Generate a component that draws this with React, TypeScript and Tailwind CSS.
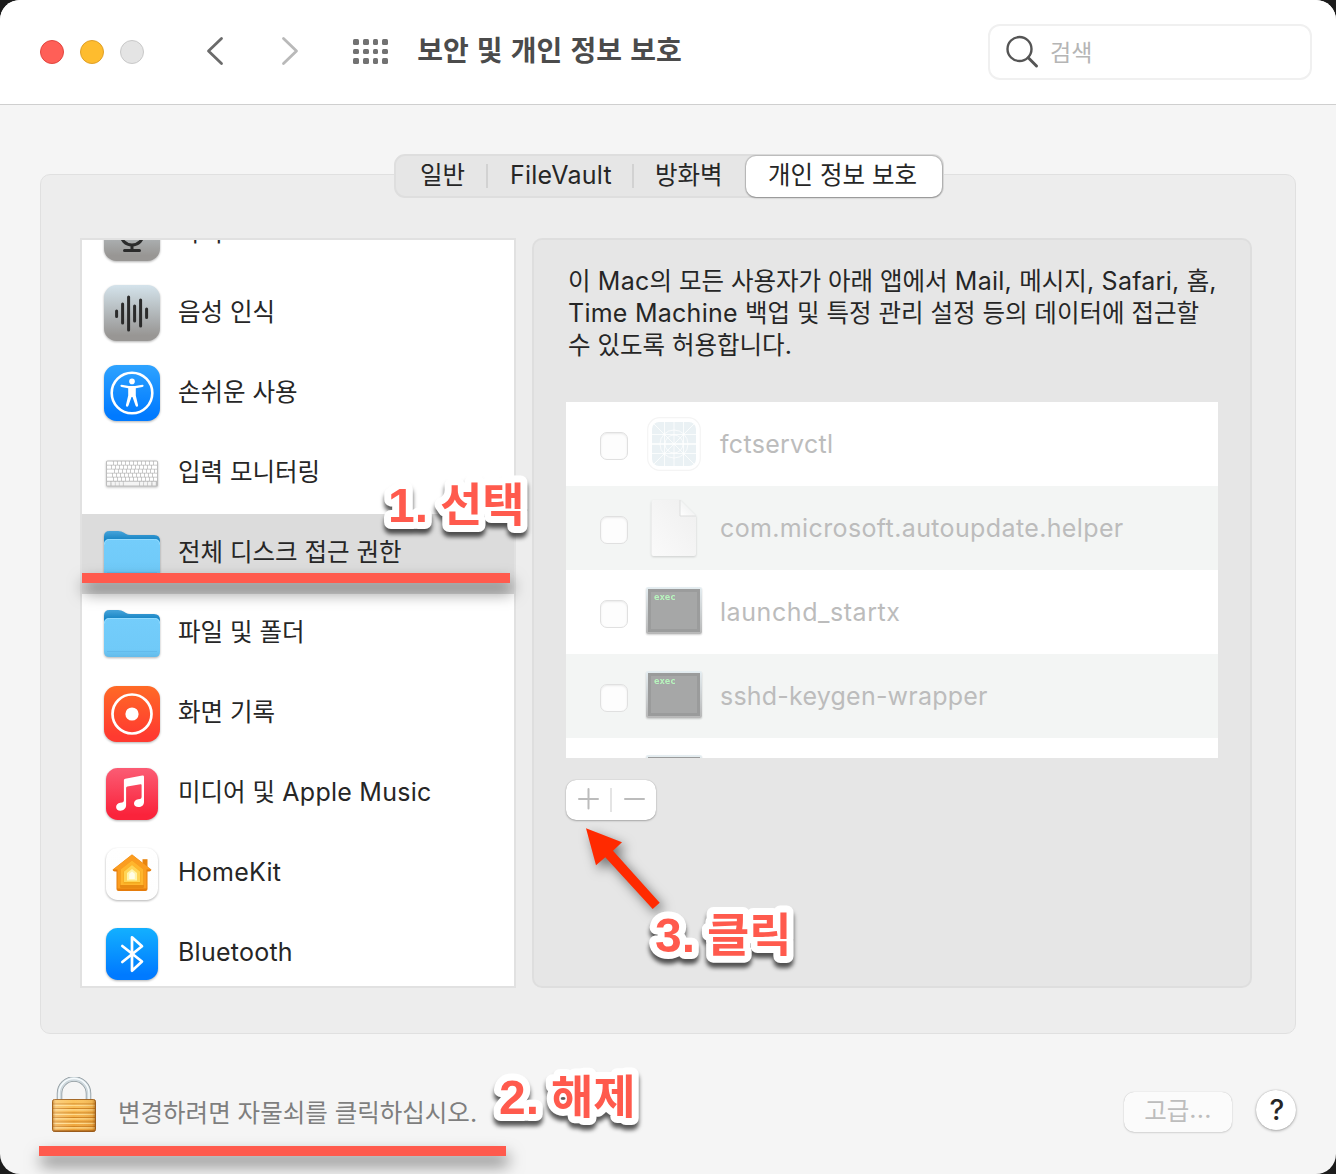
import type { ReactNode } from "react";

const FONT = "font-['Inter','Noto_Sans_CJK_KR',sans-serif]";

/* Sets Hangul runs and Latin runs at their own optical sizes. */
function T({ children }: { children: string }) {
  const runs = children.match(/[\uac00-\ud7a3]+(?: +[\uac00-\ud7a3]+)*|[^\uac00-\ud7a3]+/g) ?? [];
  return (
    <>
      {runs.map((run, i) =>
        /[\uac00-\ud7a3]/.test(run) ? (
          <span key={i} className="font-['Noto_Sans_CJK_KR',sans-serif] text-[24.5px] [word-spacing:1.4px]">
            {run}
          </span>
        ) : (
          <span key={i} className="text-[25px] tracking-[0.25px]">
            {run}
          </span>
        ),
      )}
    </>
  );
}

function Tile({ size, from, to, children }: { size: number; from: string; to: string; children: ReactNode }) {
  const id = `tile-${from.slice(1)}-${to.slice(1)}`;
  return (
    <svg width={size} height={size} viewBox={`0 0 ${size} ${size}`} className="drop-shadow-[0_1px_1px_rgba(0,0,0,0.3)]">
      <defs>
        <linearGradient id={id} x1="0" y1="0" x2="0" y2="1">
          <stop offset="0" stopColor={from} />
          <stop offset="0.9" stopColor={to} />
        </linearGradient>
      </defs>
      <rect width={size} height={size} rx={size * 0.225} fill={`url(#${id})`} />
      {children}
    </svg>
  );
}

function MicIcon() {
  return (
    <Tile size={56} from="#d3e2ea" to="#989694">
      <g stroke="#2b2b2b" fill="none" strokeLinecap="round">
        <rect x="22" y="8" width="12" height="24" rx="6" fill="#2b2b2b" stroke="none" />
        <path d="M16.5 26v2.5a11.5 11.5 0 0 0 23 0V26" strokeWidth="3" />
        <path d="M28 41v4.500M20.500 45.500h15" strokeWidth="3" />
      </g>
    </Tile>
  );
}

function WaveIcon() {
  return (
    <Tile size={56} from="#d4e3eb" to="#989694">
      <path
        d="M12.6 26v5.4M18.6 19v19M24.6 12v33M30.6 21v15M36.6 15v26M42.6 24v8.5"
        stroke="#2b2b2b"
        strokeWidth="3"
        strokeLinecap="round"
      />
    </Tile>
  );
}

function AccessIcon() {
  return (
    <Tile size={56} from="#2ea3ff" to="#007aff">
      <circle cx="28" cy="28" r="20.3" fill="none" stroke="#fff" strokeWidth="2.6" />
      <circle cx="28" cy="16.4" r="2.8" fill="#fff" />
      <path
        d="M17.6 19.8l7.4 1.1q3 .4 6 0l7.4-1.1q1.2 0 1.2 1t-1.2 1.2l-6.6 1.2v7.4l2.3 9.6q0 1.3-1 1.5t-1.5-1L28.5 32h-1L24.4 40.7q-.5 1.2-1.5 1t-1-1.500l2.300-9.600v-7.400l-6.600-1.200q-1.200-.200-1.200-1.200t1.200-1z"
        fill="#fff"
      />
    </Tile>
  );
}

function KeyboardIcon() {
  const starts = [5, 3, 6, 4, 5];
  return (
    <svg width="56" height="56" viewBox="0 0 56 56" className="drop-shadow-[0_1px_1px_rgba(0,0,0,0.25)]">
      <rect x="2" y="15.5" width="52" height="26" rx="1.5" fill="#bdbdbd" />
      {[0, 1, 2, 3, 4].map((r) => (
        <g key={r} fill="#fff">
          <rect x="3" y={16.5 + r * 4} width={starts[r] + 1} height="3.2" rx="0.5" />
          {Array.from({ length: 10 }, (_, c) => (
            <rect key={c} x={4.8 + starts[r] + c * 4} y={16.5 + r * 4} width="3.2" height="3.2" rx="0.5" />
          ))}
          <rect x={44.8 + starts[r]} y={16.5 + r * 4} width={8.2 - starts[r]} height="3.2" rx="0.5" />
        </g>
      ))}
      <g fill="#f4f4f4">
        {[3, 7.5, 11.5, 15.5].map((x) => (
          <rect key={x} x={x} y="36.8" width="3.4" height="3.8" rx="0.5" />
        ))}
        <rect x="19.7" y="36.8" width="15.5" height="3.8" rx="0.5" />
        {[36, 40, 44, 48.5].map((x) => (
          <rect key={x} x={x} y="36.8" width="3.3" height="3.8" rx="0.5" />
        ))}
      </g>
    </svg>
  );
}

function FolderIcon() {
  return (
    <svg width="56" height="56" viewBox="0 0 56 56" className="drop-shadow-[0_1px_1px_rgba(0,0,0,0.3)]">
      <defs>
        <linearGradient id="folder-back" x1="0" y1="0" x2="0" y2="1">
          <stop offset="0" stopColor="#46a4da" />
          <stop offset="0.3" stopColor="#1784c4" />
        </linearGradient>
        <linearGradient id="folder-front" x1="0" y1="0" x2="0" y2="1">
          <stop offset="0" stopColor="#74cdfb" />
          <stop offset="0.8" stopColor="#70caf8" />
          <stop offset="1" stopColor="#63bbea" />
        </linearGradient>
      </defs>
      <path d="M0 9.500Q0 4 5.500 4H14q3.500 0 6 1.700l1.500 1Q23.500 8 26.500 8H50q6 0 6 6v20H0z" fill="url(#folder-back)" />
      <path d="M0 17.500Q0 12 5.500 12h45q5.500 0 5.500 5.500V45.500q0 5.500-5.500 5.500h-45Q0 51 0 45.500z" fill="url(#folder-front)" />
      <path d="M.5 17.500q0-5 5-5h45q5 0 5 5" stroke="#92dbff" strokeWidth="1" fill="none" />
      <path d="M3 45.500h50" stroke="#60b8e8" strokeWidth="0.8" />
    </svg>
  );
}

function RecordIcon() {
  return (
    <Tile size={56} from="#ff6a26" to="#ff3a30">
      <circle cx="28" cy="28" r="19.5" fill="none" stroke="#fff" strokeWidth="2.7" />
      <circle cx="28" cy="28" r="6.6" fill="#fff" />
    </Tile>
  );
}

function MusicIcon() {
  return (
    <Tile size={52} from="#fb5c74" to="#fa233b">
      <path
        d="M36.300 8.100Q38 7.700 38 9.300V34.500c0 3-2.300 5.100-5.600 5.100-2.700 0-4.400-1.500-4.400-3.600 0-2.300 1.600-3.700 4.200-4.200l2-.400q1.400-.300 1.400-1.900V17.500q0-1.100-1.200-.800L21.300 19q-1.200.300-1.200 1.500v17.300c0 3.100-2.400 5.400-5.700 5.400-2.600 0-4.300-1.500-4.300-3.700 0-2.300 1.600-3.700 4.100-4.200l2-.400q1.700-.400 1.700-2V12.800q0-1.300 1.400-1.600z"
        transform="translate(0 -0.500)"
        fill="#fff"
      />
    </Tile>
  );
}

function HomeIcon() {
  return (
    <Tile size={52} from="#ffffff" to="#fefefe">
      <path d="M36.500 11.200h5V22h-5z" fill="#e8850f" />
      <path d="M26 6.500L45.500 21.800q-.5 1.700-2.300 1.700H41.500V41q0 2-2 2h-27q-2 0-2-2V23.500H8.800q-1.800 0-2.300-1.700z" fill="#e57c0b" />
      <path d="M26 6.500L45 21.500H40.500V40.500h-29v-19H7z" fill="#fb9d20" />
      <path d="M26 12.500L38 22v16.700q0 1.300-1.300 1.300H15.300q-1.300 0-1.300-1.300V22z" fill="#e88a12" />
      <path d="M26 12.500L37.500 21.500V37h-23V21.500z" fill="#ffb52c" />
      <path d="M26 17L34.500 23.500V35.500h-17v-12z" fill="#f2a91e" />
      <path d="M26 17L34 23.500V34H18V23.500z" fill="#ffd455" />
      <path d="M26 21l5 4v7.500H21V25z" fill="#fff3a8" />
      <path d="M26 23.500l2.800 2.200V31h-5.600v-5.300z" fill="#fffde8" />
    </Tile>
  );
}

function BluetoothIcon() {
  return (
    <Tile size={52} from="#13b0ff" to="#007aff">
      <path
        d="M16.300 18L36 33.500 26 42.700V9.300L36 18.300 16.300 34"
        stroke="#fff"
        strokeWidth="2.7"
        fill="none"
        strokeLinecap="round"
        strokeLinejoin="round"
      />
    </Tile>
  );
}

function AppGridIcon() {
  return (
    <svg width="54" height="54" viewBox="0 0 54 54">
      <rect x="0.7" y="0.7" width="52.6" height="52.6" rx="12" fill="#fff" stroke="#f4f4f4" strokeWidth="1.2" />
      <rect x="5" y="5" width="44" height="44" rx="7" fill="#eaf1f4" />
      <g stroke="#fff" strokeOpacity="0.75" strokeWidth="1" fill="none">
        <path d="M17.500 5v44M27 5v44M36.500 5v44M5 17.500h44M5 36.500h44M7 7l40 40M47 7L7 47" />
        <path d="M5 27h44" strokeWidth="2" />
        <circle cx="27" cy="27" r="14" />
        <circle cx="27" cy="27" r="9" />
      </g>
    </svg>
  );
}

function DocIcon() {
  return (
    <svg width="54" height="60" viewBox="0 0 54 60" className="drop-shadow-[0_1px_1px_rgba(0,0,0,0.16)]">
      <defs>
        <linearGradient id="doc-face" x1="1" y1="0" x2="0" y2="1">
          <stop offset="0" stopColor="#efefef" />
          <stop offset="1" stopColor="#fafafa" />
        </linearGradient>
        <linearGradient id="doc-fold" x1="0" y1="1" x2="1" y2="0">
          <stop offset="0" stopColor="#fff" />
          <stop offset="0.6" stopColor="#f1f2f2" />
        </linearGradient>
      </defs>
      <path d="M6.500 2H33L49 18V56q0 2-2 2H6.500q-2 0-2-2V4q0-2 2-2z" fill="url(#doc-face)" />
      <path d="M33 2L49 18H33z" fill="url(#doc-fold)" />
      <path d="M33 2v16h16" stroke="#dcdddd" strokeWidth="1" fill="none" />
    </svg>
  );
}

function ExecIcon({ label = "exec" }: { label?: string }) {
  return (
    <div className="mb-[3px] h-[47px] w-[56px] rounded-[2px] bg-linear-to-b from-[#e4edf1] to-[#b4b4b4] p-[2px] opacity-95 shadow-[0_1px_2px_rgba(0,0,0,0.2)]">
      <div className="h-full w-full border-[3px] border-[#969797] bg-[#a2a3a3] pl-[3px] pt-px font-['DejaVu_Sans_Mono',monospace] text-[9px] font-bold leading-[9px] text-[#b4f6ba]">
        {label}
      </div>
    </div>
  );
}

function LockIcon() {
  return (
    <svg width="46" height="57" viewBox="0 0 46 57">
      <defs>
        <linearGradient id="lock-body" x1="0" y1="0" x2="0" y2="1">
          <stop offset="0" stopColor="#fcc55f" />
          <stop offset="1" stopColor="#eda035" />
        </linearGradient>
        <linearGradient id="lock-edge" x1="0" y1="0" x2="1" y2="0">
          <stop offset="0" stopColor="#a55d10" stopOpacity="0.6" />
          <stop offset="0.09" stopColor="#fff" stopOpacity="0.2" />
          <stop offset="0.5" stopColor="#fff" stopOpacity="0" />
          <stop offset="0.92" stopColor="#a55d10" stopOpacity="0.15" />
          <stop offset="1" stopColor="#8a4a0a" stopOpacity="0.6" />
        </linearGradient>
      </defs>
      <path d="M8.500 26V16.500a14.500 14.500 0 0 1 29 0V26" stroke="#8e989d" strokeWidth="5.5" fill="none" />
      <path d="M8.500 26V16.500a14.500 14.500 0 0 1 29 0V26" stroke="#cfd9de" strokeWidth="4" fill="none" />
      <path d="M8 26V16.500a15 15 0 0 1 30 0V26" stroke="#f6fbfd" strokeWidth="1.5" fill="none" />
      <rect x="1.5" y="22.5" width="43" height="32" rx="2" fill="url(#lock-body)" stroke="#9a5a17" strokeWidth="0.9" />
      {[27, 31.5, 36, 40.5, 45, 49.5].map((y) => (
        <g key={y}>
          <path d={`M2 ${y}h42`} stroke="#d08322" strokeWidth="1.1" />
          <path d={`M2 ${y + 1.4}h42`} stroke="#ffdb8c" strokeWidth="1.1" />
        </g>
      ))}
      <rect x="1.5" y="22.5" width="43" height="32" rx="2" fill="url(#lock-edge)" />
      <path d="M2.500 54h41" stroke="#8f4f10" strokeWidth="1.2" />
    </svg>
  );
}

const categories: { label: string; icon: ReactNode; nudge?: string; selected?: boolean }[] = [
  { label: "마이크", icon: <MicIcon />, nudge: "mb-0.5" },
  { label: "음성 인식", icon: <WaveIcon />, nudge: "mb-0.5" },
  { label: "손쉬운 사용", icon: <AccessIcon />, nudge: "mb-0.5" },
  { label: "입력 모니터링", icon: <KeyboardIcon />, nudge: "mb-0.5" },
  { label: "전체 디스크 접근 권한", icon: <FolderIcon />, nudge: "mt-0.5", selected: true },
  { label: "파일 및 폴더", icon: <FolderIcon /> },
  { label: "화면 기록", icon: <RecordIcon /> },
  { label: "미디어 및 Apple Music", icon: <MusicIcon /> },
  { label: "HomeKit", icon: <HomeIcon /> },
  { label: "Bluetooth", icon: <BluetoothIcon /> },
];

const apps: { label: string; tracking: string; icon: ReactNode }[] = [
  { label: "fctservctl", tracking: "tracking-[0.3px]", icon: <AppGridIcon /> },
  { label: "com.microsoft.autoupdate.helper", tracking: "tracking-[0.37px]", icon: <DocIcon /> },
  { label: "launchd_startx", tracking: "tracking-[0.57px]", icon: <ExecIcon /> },
  { label: "sshd-keygen-wrapper", tracking: "tracking-[0.22px]", icon: <ExecIcon /> },
  { label: "", tracking: "", icon: <ExecIcon label="" /> },
];

function Header() {
  return (
    <header className="flex h-[105px] shrink-0 items-center border-b border-[#cfcfcf] bg-white pl-10 pr-6">
      <div className="flex gap-4">
        <span className="size-6 rounded-full border border-[#e2463f] bg-[#ff5f57]" />
        <span className="size-6 rounded-full border border-[#e0a028] bg-[#febc2e]" />
        <span className="size-6 rounded-full border border-[#c9c9c9] bg-[#e4e4e4]" />
      </div>
      <svg width="20" height="32" viewBox="0 0 20 32" className="-mt-0.5 ml-[60px]">
        <path d="M17.500 3.500L4.500 16l13 12.500" stroke="#6b6b6b" strokeWidth="2.8" fill="none" strokeLinecap="round" strokeLinejoin="round" />
      </svg>
      <svg width="20" height="32" viewBox="0 0 20 32" className="-mt-0.5 ml-[56px]">
        <path d="M3.500 3.500L16.500 16l-13 12.500" stroke="#b9b9b9" strokeWidth="2.8" fill="none" strokeLinecap="round" strokeLinejoin="round" />
      </svg>
      <div className="-mt-px ml-[53px] grid grid-cols-4 gap-1">
        {Array.from({ length: 12 }, (_, i) => (
          <span key={i} className="size-[5.8px] rounded-[1.5px] bg-[#727272]" />
        ))}
      </div>
      <h1 className="-mt-1.5 ml-[29px] whitespace-nowrap font-['Noto_Sans_CJK_KR',sans-serif] text-[28px] font-bold leading-10 text-[#4b4b4b] [word-spacing:1.8px]">
        보안 및 개인 정보 보호
      </h1>
      <div className="ml-auto flex h-14 w-[324px] items-center rounded-xl border-2 border-[#f0f0f0] pl-4">
        <svg width="34" height="34" viewBox="0 0 34 34">
          <circle cx="13.5" cy="14" r="12" fill="none" stroke="#555" strokeWidth="2.4" />
          <path d="M22.300 22.800l8.200 8.200" stroke="#555" strokeWidth="3" strokeLinecap="round" />
        </svg>
        <span className="-mt-0.5 ml-[10px] font-['Noto_Sans_CJK_KR',sans-serif] text-[23px] leading-8 text-[#b5b5b5]">검색</span>
      </div>
    </header>
  );
}

function Tabs() {
  return (
    <div className="relative z-10 -mb-6 ml-[354px] flex h-11 w-[550px] items-center whitespace-nowrap rounded-[11px] border-2 border-[#dedede] bg-[#e6e6e6] text-[#262626]">
      <span className="-mt-1 w-[90px] pl-6">
        <T>일반</T>
      </span>
      <span className="h-6 w-0.5 bg-[#d2d2d2]" />
      <span className="w-[144px] pl-[22px]">
        <T>FileVault</T>
      </span>
      <span className="h-6 w-0.5 bg-[#d2d2d2]" />
      <span className="-mt-1 w-[112px] pl-[21px]">
        <T>방화벽</T>
      </span>
      <span className="flex h-[41px] w-[196px] items-center rounded-[10px] bg-white pb-1 pl-[22px] shadow-[0_0_1px_1px_rgba(0,0,0,0.16),0_1px_2px_rgba(0,0,0,0.25)]">
        <T>개인 정보 보호</T>
      </span>
    </div>
  );
}

function CategoryList() {
  return (
    <div className="h-[750px] w-[436px] shrink-0 overflow-hidden border-2 border-[#e1e1e1] bg-white">
      <ul className="-mt-[46px]">
        {categories.map((c) => (
          <li key={c.label} className={`flex h-20 items-center pl-[22px] ${c.selected ? "bg-[#dcdcdc]" : ""}`}>
            <span className={`flex w-14 justify-center ${c.nudge ?? ""}`}>{c.icon}</span>
            <span className="-mt-0.5 ml-[18px] whitespace-nowrap leading-9 text-[#262626]">
              <T>{c.label}</T>
            </span>
          </li>
        ))}
      </ul>
    </div>
  );
}

function AppPane() {
  return (
    <div className="h-[750px] w-[720px] rounded-[10px] border-2 border-[#dedede] bg-[#e6e6e6] px-8">
      <p className="mt-6 h-[138px] whitespace-nowrap pl-0.5 text-[#262626]">
        <span className="block h-8 leading-8">
          <T>이 Mac의 모든 사용자가 아래 앱에서 Mail, 메시지, Safari, 홈,</T>
        </span>
        <span className="block h-8 leading-8">
          <T>Time Machine 백업 및 특정 관리 설정 등의 데이터에 접근할</T>
        </span>
        <span className="block h-8 leading-8">
          <T>수 있도록 허용합니다.</T>
        </span>
      </p>
      <ul className="h-[356px] w-[652px] overflow-hidden bg-white">
        {apps.map((a, i) => (
          <li key={i} className={`flex h-[84px] items-center pl-[34px] ${i % 2 ? "bg-[#f3f5f4]" : "bg-white"}`}>
            <span className="mt-1 size-7 rounded-[7px] border border-[#e0e0e0] bg-[#fdfdfd] shadow-[inset_0_1px_2px_rgba(0,0,0,0.08)]" />
            <span className="ml-[18px] flex w-14 justify-center">{a.icon}</span>
            <span className={`ml-[18px] mt-0.5 whitespace-nowrap text-[25px] text-[#bcbcbc] ${a.tracking}`}>{a.label}</span>
          </li>
        ))}
      </ul>
      <div className="mt-[22px] flex h-10 w-[90px] items-center rounded-[10px] bg-white shadow-[0_0_1px_rgba(0,0,0,0.3),0_1px_2px_rgba(0,0,0,0.25)]">
        <svg width="90" height="40" viewBox="0 0 90 40" fill="none" strokeLinecap="round">
          <path d="M13 19h19M22.500 9v19.500M59 19h19" stroke="#bcbcbc" strokeWidth="2" />
          <path d="M45 8v24" stroke="#dedede" strokeWidth="1.6" strokeLinecap="butt" />
        </svg>
      </div>
    </div>
  );
}

function Footer() {
  return (
    <footer className="flex h-[140px] items-start pl-[50.5px] pr-10 pt-[43px]">
      <LockIcon />
      <span className="ml-[21.500px] mt-[17px] whitespace-nowrap leading-9 text-[#7e7e7e]">
        <T>변경하려면 자물쇠를 클릭하십시오.</T>
      </span>
      <span className="ml-auto mt-[15px] flex h-10 w-[108px] items-center justify-center rounded-[10px] bg-[#fbfbfb] pb-1 text-[#bdbdbd] shadow-[0_0_1px_rgba(0,0,0,0.25),0_1px_2px_rgba(0,0,0,0.12)]">
        <T>고급...</T>
      </span>
      <span className="ml-6 mt-[13px] flex size-10 items-center justify-center rounded-full bg-white pl-0.5 text-[28px] font-medium text-[#262626] shadow-[0_0_1px_rgba(0,0,0,0.3),0_1px_3px_rgba(0,0,0,0.3)]">
        ?
      </span>
    </footer>
  );
}

/* Outlined red call-out: number, then Hangul. */
function Note({ className, num, word }: { className: string; num: string; word: string }) {
  return (
    <svg
      width="170"
      height="80"
      viewBox="0 0 170 80"
      className={`absolute drop-shadow-[0_5px_2px_rgba(0,0,0,0.65)] ${className}`}
    >
      {[0, 1].map((k) => (
        <g
          key={k}
          aria-hidden={k === 0}
          fill="#ff5a4d"
          stroke={k ? "none" : "#fff"}
          strokeWidth="14"
          strokeLinejoin="round"
          fontWeight="700"
        >
          <text x="13" y="51.5" fontFamily="'Liberation Sans', sans-serif" fontSize="48">
            {num}
          </text>
          <text x="65" y="50.5" fontFamily="'Noto Sans CJK KR', sans-serif" fontSize="46">
            {word}
          </text>
        </g>
      ))}
    </svg>
  );
}

export default function App() {
  return (
    <div className={`relative h-[1174px] w-[1336px] overflow-hidden bg-[#1c1c1c] ${FONT}`}>
      <div className="flex h-full flex-col overflow-hidden rounded-[20px] bg-[#f5f5f5]">
        <Header />
        <main className="px-10 pt-[49px]">
          <Tabs />
          <section className="flex h-[860px] gap-4 rounded-[10px] border border-[#e0e0e0] bg-[#ededed] pl-[39px] pt-[63px]">
            <CategoryList />
            <AppPane />
          </section>
        </main>
        <Footer />
      </div>

      <div className="absolute left-[82px] top-[573px] h-[10px] w-[428px] bg-[#ff5a4d] shadow-[2px_9px_16px_rgba(0,0,0,0.55)]" />
      <div className="absolute left-[39px] top-[1146px] h-[10px] w-[467px] bg-[#ff5a4d] shadow-[2px_9px_16px_rgba(0,0,0,0.55)]" />
      <svg
        width="110"
        height="110"
        viewBox="570 815 110 110"
        className="absolute left-[570px] top-[815px] overflow-visible drop-shadow-[4px_5px_6px_rgba(0,0,0,0.5)]"
      >
        <path d="M586 828.300L622 842.300 613 850.700 659.700 902.700 652.700 909 605.300 857.300 596 865.300z" fill="#ff2a00" />
      </svg>
      <Note className="left-[375px] top-[470px]" num="1." word="선택" />
      <Note className="left-[486px] top-[1062px]" num="2." word="해제" />
      <Note className="left-[642px] top-[900px]" num="3." word="클릭" />
    </div>
  );
}
